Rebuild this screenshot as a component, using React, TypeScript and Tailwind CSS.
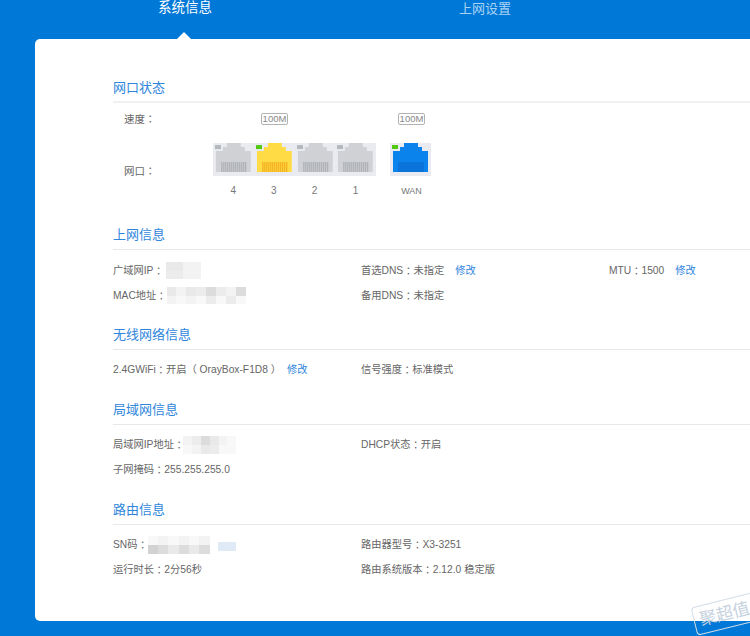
import React from "react";

const font = "font-['Liberation_Sans','Noto_Sans_CJK_SC',sans-serif]";

function Port({ kind, led }: { kind: "gray" | "yellow" | "blue"; led: boolean }) {
  const body = kind === "gray" ? "#cfd1d5" : kind === "yellow" ? "#ffdb45" : "#0a84ec";
  const pin = kind === "gray" ? "#a0a3a8" : kind === "yellow" ? "#ee9f12" : "#0b62c6";
  const xs = Array.from({ length: 13 }, (_, i) => 8.5 + i * 2);
  return (
    <svg width="41" height="33" viewBox="0 0 41 33" className="block">
      <rect x="2" y="2" width="6" height="4" fill={led ? "#52c80f" : "#b5b8bd"} />
      <path d="M3 29V8H10V4H14V0H28V4H32V8H38V29Z" fill={body} />
      {xs.map((x) => (
        <rect key={x} x={x} y="19" width="0.9" height="10" fill={pin} />
      ))}
    </svg>
  );
}

function Section({ title, children, mt, rule = "border-b border-[#e8e8e8]" }: { title: string; children: React.ReactNode; mt: string; rule?: string }) {
  return (
    <section className={mt}>
      <h2 className={`h-[25px] text-[13px] leading-[20px] font-normal text-[#2f86dc] ${rule}`}>{title}</h2>
      {children}
    </section>
  );
}

function Blur({ rows, w, h, className = "" }: { rows: string[][]; w: string; h: string; className?: string }) {
  return (
    <span className={`inline-flex flex-col overflow-hidden blur-[0.6px] ${w} ${h} ${className}`}>
      {rows.map((r, i) => (
        <span key={i} className="flex flex-1">
          {r.map((c, j) => (
            <span key={j} className={`flex-1 ${c}`} />
          ))}
        </span>
      ))}
    </span>
  );
}

const Link = ({ className = "" }: { className?: string }) => (
  <span className={`text-[#2f86dc] ${className}`}>修改</span>
);

const C = () => <span className="font-['Noto_Sans_CJK_TC',sans-serif]">：</span>;

const a = "bg-[#e9e9e9]";
const b = "bg-[#f3f3f3]";
const c = "bg-[#dcdcdc]";
const d = "bg-[#f8f8f8]";
const e = "bg-[#d2d2d2]";
const f = "bg-[#ececec]";

function Row({ children, className = "" }: { children: React.ReactNode; className?: string }) {
  return <div className={`grid grid-cols-[248px_248px_1fr] items-center h-[25px] ${className}`}>{children}</div>;
}

function Cell({ children }: { children: React.ReactNode }) {
  return <div className="flex items-center whitespace-nowrap">{children}</div>;
}

export default function App() {
  return (
    <div className={`relative w-[750px] h-[636px] overflow-hidden bg-[#0078d7] ${font}`}>
      <nav className="flex h-[39px] relative">
        <div className="ml-[158px] mt-[-2px] w-[54px] text-center text-[13.5px] leading-[20px] text-white whitespace-nowrap">系统信息</div>
        <div className="ml-[246px] mt-[-1px] w-[54px] text-center text-[13px] leading-[20px] text-[#a9d3f4] whitespace-nowrap">上网设置</div>
        <span className="absolute left-[177px] top-[32px] w-0 h-0 border-x-[7px] border-x-transparent border-b-[7px] border-b-white" />
      </nav>

      <main className="ml-[35px] w-[760px] h-[582px] bg-white rounded-[5px] pl-[78px] pt-[39px] text-[10.25px] text-[#666]">
        <Section title="网口状态" mt="" rule="border-b-2 border-[#f1f1f1]">
          <div className="flex items-center h-[32px] pl-[11px]">
            <span className="w-[137px] text-[10.5px]">速度<C /></span>
            <span className="w-[27px] h-[12px] border border-[#b3b3b3] rounded-[2px] text-[9.5px] leading-[10px] text-center text-[#888]">100M</span>
            <span className="ml-[110px] w-[27px] h-[12px] border border-[#b3b3b3] rounded-[2px] text-[9.5px] leading-[10px] text-center text-[#888]">100M</span>
          </div>
          <div className="flex pl-[11px] h-[33px] mt-[8px]">
            <span className="w-[89px] self-center mt-[22px] text-[10.5px] leading-[12px]">网口<C /></span>
            <div className="flex bg-[#e9ebf0] w-[163px]">
              <Port kind="gray" led={false} />
              <Port kind="yellow" led />
              <Port kind="gray" led={false} />
              <Port kind="gray" led={false} />
            </div>
            <div className="ml-[14px] bg-[#e9ebf0]">
              <Port kind="blue" led />
            </div>
          </div>
          <div className="flex pl-[100px] mt-[8px] h-[14px] text-[10px] leading-[14px] text-[#777]">
            <span className="w-[40.5px] text-center">4</span>
            <span className="w-[40.5px] text-center">3</span>
            <span className="w-[41px] text-center">2</span>
            <span className="w-[41px] text-center">1</span>
            <span className="ml-[15px] w-[41px] text-center text-[9px]">WAN</span>
          </div>
        </Section>

        <Section title="上网信息" mt="mt-[27px]">
          <Row className="mt-[8px]">
            <Cell>
              广域网IP<C />
              <Blur w="w-[35px]" h="h-[17px]" rows={[[a, b], [f, b]]} className="ml-[2px]" />
            </Cell>
            <Cell>
              首选DNS<C />未指定
              <Link className="ml-[11px]" />
            </Cell>
            <Cell>
              MTU<C />1500
              <Link className="ml-[11px]" />
            </Cell>
          </Row>
          <Row>
            <Cell>
              MAC地址<C />
              <Blur w="w-[79px]" h="h-[17px]" rows={[[a, b, a, f, c, f, b, c], [b, d, b, d, f, d, f, d]]} />
            </Cell>
            <Cell>备用DNS<C />未指定</Cell>
            <div />
          </Row>
        </Section>

        <Section title="无线网络信息" mt="mt-[17px]">
          <Row className="mt-[7px]">
            <Cell>
              2.4GWiFi<C />开启（ OrayBox-F1D8 ）
              <Link className="ml-[6px]" />
            </Cell>
            <Cell>信号强度<C />标准模式</Cell>
            <div />
          </Row>
        </Section>

        <Section title="局域网信息" mt="mt-[18px]">
          <Row className="mt-[7px]">
            <Cell>
              局域网IP地址<C />
              <Blur w="w-[53px]" h="h-[18px]" rows={[[b, f, c, a, b, d], [d, b, a, f, d, d]]} className="ml-[-1px]" />
            </Cell>
            <Cell>DHCP状态<C />开启</Cell>
            <div />
          </Row>
          <Row>
            <Cell>子网掩码<C />255.255.255.0</Cell>
            <div />
            <div />
          </Row>
        </Section>

        <Section title="路由信息" mt="mt-[18px]">
          <Row className="mt-[7px]">
            <Cell>
              SN码<C />
              <Blur w="w-[62px]" h="h-[18px]" rows={[[d, b, d, b, d, b], [e, c, a, c, a, c]]} />
              <span className="ml-[8px] mt-[4px] w-[18px] h-[9px] bg-[#dfeaf6]" />
            </Cell>
            <Cell>路由器型号<C />X3-3251</Cell>
            <div />
          </Row>
          <Row>
            <Cell>运行时长<C />2分56秒</Cell>
            <Cell>路由系统版本<C />2.12.0 稳定版</Cell>
            <div />
          </Row>
        </Section>
      </main>

      <div className="absolute left-[693px] top-[599px] w-[68px] h-[29px] -rotate-[14deg] border border-[#d3dce6] rounded-[4px] pl-[5px] text-[17px] leading-[27px] font-normal text-[#c6d2de] whitespace-nowrap">
        聚超值
      </div>
    </div>
  );
}
